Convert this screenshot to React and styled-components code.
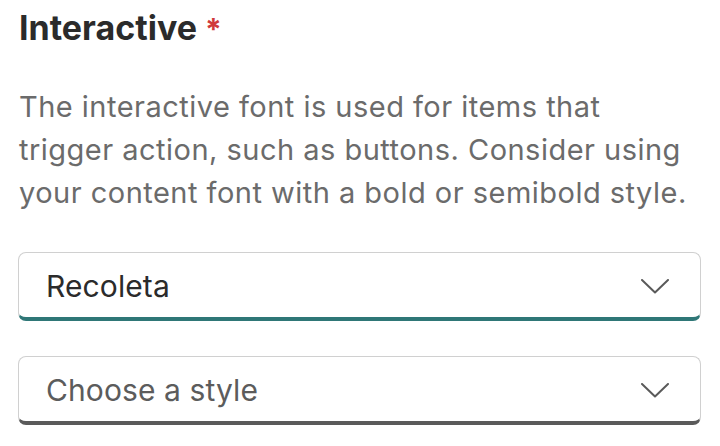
import React from "react";
import styled, { createGlobalStyle } from "styled-components";

const Global = createGlobalStyle`
  html, body { margin: 0; padding: 0; background: #ffffff; }
  body { font-family: Inter, "Noto Sans", sans-serif; -webkit-font-smoothing: antialiased; }
`;

const Panel = styled.div`
  width: 720px;
  height: 446px;
  box-sizing: border-box;
  padding: 8px 19px 0 18px;
  display: flex;
  flex-direction: column;
  overflow: hidden;
`;

const Heading = styled.h2`
  margin: 0 0 0 1px;
  font-size: 34px;
  line-height: 40px;
  font-weight: 700;
  color: #2b2b2b;
  letter-spacing: 0;
`;

const Required = styled.span`
  color: #d0393b;
  margin-left: 8px;
  font-size: 30px;
`;

const Description = styled.p`
  margin: 36px 0 0 1px;
  font-size: 29px;
  line-height: 43px;
  letter-spacing: 0.48px;
  color: #6b6b6b;
  font-weight: 400;
`;

const Select = styled.div`
  margin-top: ${(p) => p.$gap}px;
  height: 69px;
  box-sizing: border-box;
  border: 1.5px solid #d0d0d0;
  border-bottom: 4px solid ${(p) => p.$accent};
  border-radius: 8px;
  display: flex;
  align-items: center;
  justify-content: space-between;
  padding: 2px 31px 0 27px;
`;

const Value = styled.span`
  font-size: 30px;
  letter-spacing: 0.1px;
  color: ${(p) => (p.$placeholder ? "#5c5c5c" : "#2b2b2b")};
`;

const Chevron = () => (
  <svg width="28" height="15" viewBox="0 0 28 15" fill="none">
    <path d="M1 1 L14 13.5 L27 1" stroke="#5a5a5a" strokeWidth="2" strokeLinecap="round" strokeLinejoin="round" />
  </svg>
);

export default function App() {
  return (
    <>
      <Global />
      <Panel>
        <Heading>
          Interactive<Required>*</Required>
        </Heading>
        <Description>
          The interactive font is used for items that trigger action, such as buttons. Consider using your content font with a bold or semibold style.
        </Description>
        <Select $accent="#2f7777" $gap={38}>
          <Value>Recoleta</Value>
          <Chevron />
        </Select>
        <Select $accent="#5a5a5a" $gap={35}>
          <Value $placeholder>Choose a style</Value>
          <Chevron />
        </Select>
      </Panel>
    </>
  );
}
